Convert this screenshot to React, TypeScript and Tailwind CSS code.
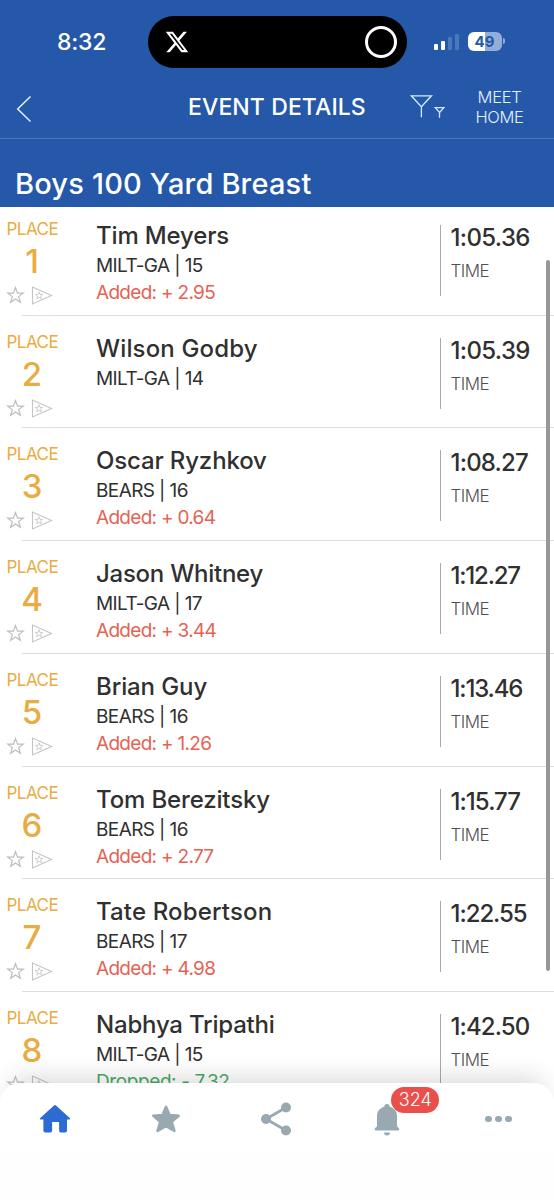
import React from 'react';
import clsx from 'clsx';

interface Result {
  place: number;
  name: string;
  team: string;
  time: string;
  delta?: string;
  dropped?: boolean;
  nameTracking: string;
  timeTracking: string;
}

const RESULTS: Result[] = [
  { place: 1, name: 'Tim Meyers', team: 'MILT-GA | 15', time: '1:05.36', delta: 'Added: + 2.95', nameTracking: 'tracking-[-0.150px]', timeTracking: 'tracking-[-0.650px]' },
  { place: 2, name: 'Wilson Godby', team: 'MILT-GA | 14', time: '1:05.39', nameTracking: 'tracking-[0.150px]', timeTracking: 'tracking-[-0.650px]' },
  { place: 3, name: 'Oscar Ryzhkov', team: 'BEARS | 16', time: '1:08.27', delta: 'Added: + 0.64', nameTracking: 'tracking-[-0.150px]', timeTracking: 'tracking-[-0.800px]' },
  { place: 4, name: 'Jason Whitney', team: 'MILT-GA | 17', time: '1:12.27', delta: 'Added: + 3.44', nameTracking: 'tracking-[-0.250px]', timeTracking: 'tracking-[-1.200px]' },
  { place: 5, name: 'Brian Guy', team: 'BEARS | 16', time: '1:13.46', delta: 'Added: + 1.26', nameTracking: 'tracking-[-0.100px]', timeTracking: 'tracking-[-1.150px]' },
  { place: 6, name: 'Tom Berezitsky', team: 'BEARS | 16', time: '1:15.77', delta: 'Added: + 2.77', nameTracking: 'tracking-[-0.150px]', timeTracking: 'tracking-[-0.950px]' },
  { place: 7, name: 'Tate Robertson', team: 'BEARS | 17', time: '1:22.55', delta: 'Added: + 4.98', nameTracking: 'tracking-[0.150px]', timeTracking: 'tracking-[-1.050px]' },
  { place: 8, name: 'Nabhya Tripathi', team: 'MILT-GA | 15', time: '1:42.50', delta: 'Dropped: - 7.32', dropped: true, nameTracking: 'tracking-[-0.200px]', timeTracking: 'tracking-[-0.900px]' },
];

const STAR = 'M12 2l2.6 7h7.2l-5.8 4.4 2.1 7.2-6.1-4.3-6.1 4.3 2.1-7.2L2.200 9h7.200z';

const StatusBar: React.FC = () => (
  <div className="flex h-[69px] items-start pt-[15.500px] text-white">
    <span className="ml-[57px] mt-[9px] w-[91px] text-[23px] font-medium leading-[34px] tracking-[-0.200px]">8:32</span>
    <div className="flex h-[52px] w-[259px] items-center justify-between rounded-full bg-black pl-[16.500px] pr-[10px]">
      <svg width="24" height="24" viewBox="0.500 0.500 23 23" fill="white">
        <path d="M18.244 2.25h3.308l-7.227 8.26 8.502 11.24H16.17l-5.214-6.817L4.99 21.75H1.68l7.73-8.835L1.254 2.25H8.08l4.713 6.231zm-1.161 17.52h1.833L7.084 4.126H5.117z" />
      </svg>
      <div className="h-8 w-8 rounded-full border-[3px] border-white" />
    </div>
    {/* Signal */}
    <div className="ml-[27px] mt-[17px] flex h-[17px] items-end gap-[3px]">
      <div className="h-[6px] w-[4px] rounded-[1px] bg-white" />
      <div className="h-[9px] w-[4px] rounded-[1px] bg-white" />
      <div className="h-[13px] w-[4px] rounded-[1px] bg-[#4a78b8]" />
      <div className="h-[16px] w-[4px] rounded-[1px] bg-[#4a78b8]" />
    </div>
    {/* Battery */}
    <div className="ml-[8.500px] mt-[16px] flex items-center gap-[1px]">
      <div className="h-[19px] w-[34px] rounded-[6px] bg-linear-to-r from-white from-50% to-[#91add8] to-50% text-center text-[15px] font-bold leading-[19px] text-[#2558a8]">
        49
      </div>
      <div className="h-[6px] w-[2px] rounded-r-full bg-[#91add8]" />
    </div>
  </div>
);

const TitleBar: React.FC = () => (
  <div className="flex h-[70px] border-b border-[#4b77bb] text-white">
    <svg className="ml-[16px] mt-[26px]" width="16" height="28" viewBox="0 0 16 28" fill="none" stroke="#e4f1ff" strokeWidth="1.5">
      <path d="M14.500 1.500L1.700 14l12.800 12.500" />
    </svg>
    <h1 className="ml-[156px] mt-[22px] w-[222px] whitespace-nowrap text-[23px] font-medium leading-[32px] tracking-[0.100px]">EVENT DETAILS</h1>
    <svg className="mt-[25px] shrink-0" width="36" height="26" viewBox="0 0 36 26" fill="none" stroke="#d4ebff" strokeWidth="1.300">
      <path d="M1.200 1.800h20.300L11.400 12.800zM11.400 12.800v10.500M25.300 13.700h8.500l-4.200 4.800zM29.500 18.500v5.300" />
    </svg>
    <div className="ml-[23.500px] mt-[19px] w-[60px] text-center text-[16.500px] font-light leading-[19.500px] tracking-[-0.300px] text-[#e2f2ff]">
      MEET
      <br />
      HOME
    </div>
  </div>
);

const ResultRow: React.FC<{ result: Result }> = ({ result }) => (
  <li className="flex h-[112.700px] shrink-0">
    <div className="flex w-[96px] shrink-0 flex-col pt-[16px] text-[#e9ac44]">
      <span className="pl-[6.500px] text-[17px] leading-[20px] tracking-[-0.500px]">PLACE</span>
      <span className="w-[64px] text-center text-[33px] font-medium leading-[44px]">{result.place}</span>
      <div className="flex items-center gap-[6px] pl-[6px] pt-[3px]">
        <svg width="19" height="19" viewBox="0 0 24 24" fill="none" stroke="#bdbdbd" strokeWidth="1.500">
          <path d={STAR} />
        </svg>
        <svg width="22" height="19" viewBox="0 0 22 19" fill="none" stroke="#c4c4c4" strokeWidth="1.100">
          <path d="M1.500 1v17L20.500 9.500z" />
          <path d={STAR} transform="translate(3.500 5) scale(.38)" strokeWidth="2.200" />
        </svg>
      </div>
    </div>
    <div className="w-[344px] shrink-0 whitespace-nowrap pt-[17px]">
      <div className={clsx('text-[24px] font-medium leading-[32px] text-[#303030]', result.nameTracking)}>{result.name}</div>
      <div className="text-[19px] leading-[27px] tracking-[-0.600px] text-[#303030]">{result.team}</div>
      {result.delta && (
        <div className={clsx('text-[19px] leading-[27px]', result.dropped ? 'tracking-[-0.400px] text-[#4aac65]' : 'tracking-[-0.700px] text-[#e46354]')}>
          {result.delta}
        </div>
      )}
    </div>
    <div className="mt-[22px] h-[71px] whitespace-nowrap border-l-[1.500px] border-[#aaa] pl-[9.500px]">
      <div className={clsx('text-[24px] font-medium leading-[26px] text-[#303030]', result.timeTracking)}>{result.time}</div>
      <div className="mt-[10px] text-[17px] font-light leading-[20px] tracking-[-0.500px] text-[#505050]">TIME</div>
    </div>
  </li>
);

const BottomNav: React.FC = () => (
  <nav className="relative z-10 flex h-[69px] items-center rounded-[20px] bg-white text-[#98a9b2] shadow-[0_-16px_26px_-12px_rgba(0,0,0,0.16)]">
    <div className="flex flex-1 justify-center pt-[3px]">
      <svg width="32" height="30" viewBox="0 0 32 30" fill="#2c6cd2">
        <path d="M15 1.500q1-.9 2 0L31 14.300c.5.600.2 1.100-.6 1.100H28v11.300q0 1.800-1.800 1.800h-4.300q-1.800 0-1.800-1.800v-8.700h-7v8.700q0 1.800-1.800 1.800H6.200q-1.800 0-1.800-1.800V15.400H1.600c-.8 0-1.100-.5-.6-1.100z" />
      </svg>
    </div>
    <div className="flex flex-1 justify-center pt-[2px]">
      <svg width="30" height="30" viewBox="0 0 30 30" fill="currentColor" stroke="currentColor" strokeWidth="2.500" strokeLinejoin="round">
        <path d="M15 2.800l3.500 8.200 9.200.7-7 6.200 2.800 9-8.500-4.800-8.500 4.800 2.800-9-7-6.200 9.200-.7z" />
      </svg>
    </div>
    <div className="flex flex-1 justify-center pt-[3px]">
      <svg width="32" height="34" viewBox="0 0 32 34" fill="currentColor">
        <path d="M26 5.500L6 17l20 11.500" fill="none" stroke="currentColor" strokeWidth="2.800" />
        <circle cx="6" cy="17" r="5" />
        <circle cx="26" cy="5.500" r="5" />
        <circle cx="26" cy="28.500" r="5" />
      </svg>
    </div>
    <div className="relative flex flex-1 justify-center pr-[1px] pt-[4px]">
      <svg width="26" height="34" viewBox="0 0 26 34" fill="currentColor">
        <path d="M13 1c1.700 0 2.700 1 2.700 2.700C20 4.800 23 8.300 23 13v9.500c0 1 .5 1.500 1.600 2.300 1 .8.900 2.700-.6 2.700H2c-1.500 0-1.600-1.900-.6-2.700C2.500 24 3 23.500 3 22.500V13c0-4.700 3-8.200 7.300-9.300C10.300 2 11.300 1 13 1zM10 29.500h6c0 1.700-1.300 3-3 3s-3-1.300-3-3z" />
      </svg>
      <span className="absolute left-[59.500px] top-[-12px] h-[26px] w-[48px] rounded-full bg-[#e9504c] text-center text-[18px] font-light leading-[26px] text-white">
        324
      </span>
    </div>
    <div className="flex flex-1 justify-center gap-[3.500px] pt-[3px]">
      <div className="h-[6.500px] w-[6.500px] rounded-full bg-[#98a9b2]" />
      <div className="h-[6.500px] w-[6.500px] rounded-full bg-[#98a9b2]" />
      <div className="h-[6.500px] w-[6.500px] rounded-full bg-[#98a9b2]" />
    </div>
  </nav>
);

const App: React.FC = () => (
  <div className="flex h-[1200px] w-[554px] flex-col overflow-hidden bg-white font-['Inter','Liberation_Sans',sans-serif]">
    <header className="h-[207px] shrink-0 bg-[#2558a8]">
      <StatusBar />
      <TitleBar />
      <h2 className="whitespace-nowrap pl-[15px] pt-[26px] text-[29px] font-medium leading-[38px] tracking-[0.180px] text-white">Boys 100 Yard Breast</h2>
    </header>

    <main className="relative -mb-[20px] h-[896px] shrink-0 overflow-hidden">
      <ul className="-mt-[3.900px] flex flex-col">
        {RESULTS.map((result) => (
          <React.Fragment key={result.place}>
            <ResultRow result={result} />
            <li className="-mt-px ml-[22px] h-px shrink-0 bg-[#dedede]" />
          </React.Fragment>
        ))}
      </ul>
      {/* Scroll indicator */}
      <div className="absolute right-[4px] top-[53px] h-[711px] w-[4.500px] rounded-full bg-[#979797]" />
    </main>

    <BottomNav />
    <div className="h-[48px] bg-[#fefefe]" />
  </div>
);

export default App;
